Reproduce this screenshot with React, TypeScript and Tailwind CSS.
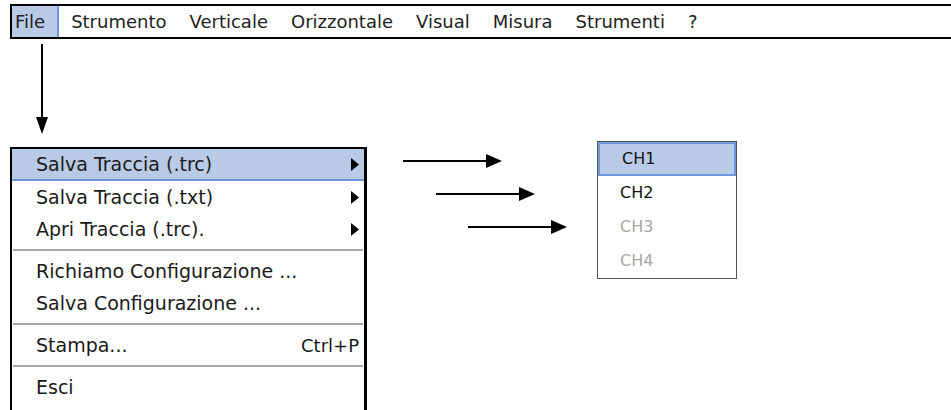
const FONT = { fontFamily: '"DejaVu Sans", Verdana, sans-serif' };

function RightArrow({ length }: { length: number }) {
  return (
    <svg width={length} height={16} viewBox={`0 0 ${length} 16`} className="block">
      <line x1={0} y1={8} x2={length - 14} y2={8} stroke="black" strokeWidth={2} />
      <polygon points={`${length - 16},1 ${length},8 ${length - 16},15`} fill="black" />
    </svg>
  );
}

function SubArrow() {
  return (
    <svg width={8} height={13} viewBox="0 0 8 13" className="block">
      <polygon points="0,0 8,6.5 0,13" fill="black" />
    </svg>
  );
}

function Separator() {
  return (
    <div className="py-[4px]">
      <div className="h-[2px] bg-[#a6a6a6] mx-[1px]" />
    </div>
  );
}

type Item = { label: string; sub?: boolean; shortcut?: string; active?: boolean };

function MenuRow({ item }: { item: Item }) {
  return (
    <div
      className={
        "h-[32px] flex items-center pl-[24px] pr-[5px] text-[19px] text-[#1a1a1a] " +
        (item.active ? "bg-[#b8cae5] border-b-2 border-[#6f96d6]" : "")
      }
    >
      <span className="flex-1 whitespace-nowrap">{item.label}</span>
      {item.sub && <SubArrow />}
      {item.shortcut && <span className="text-[18px]">{item.shortcut}</span>}
    </div>
  );
}

export default function App() {
  const menubar = ["Strumento", "Verticale", "Orizzontale", "Visual", "Misura", "Strumenti", "?"];
  const group1: Item[] = [
    { label: "Salva Traccia (.trc)", sub: true, active: true },
    { label: "Salva Traccia (.txt)", sub: true },
    { label: "Apri Traccia (.trc).", sub: true },
  ];
  const group2: Item[] = [
    { label: "Richiamo Configurazione ..." },
    { label: "Salva Configurazione ..." },
  ];
  const channels = [
    { name: "CH1", active: true, enabled: true },
    { name: "CH2", enabled: true },
    { name: "CH3" },
    { name: "CH4" },
  ];

  return (
    <div className="w-[951px] h-[410px] bg-white overflow-hidden pt-[4px]" style={FONT}>
      {/* menu bar */}
      <div className="ml-[10px] h-[35px] border-y-2 border-l-2 border-black flex items-stretch text-[18px] text-[#222]">
        <div className="bg-[#b8cae5] border-r-2 border-[#6f96d6] pl-[3px] pr-[12px] flex items-center">File</div>
        <div className="flex items-center gap-[23px] ml-[12px]">
          {menubar.map((m) => (
            <span key={m}>{m}</span>
          ))}
        </div>
      </div>

      {/* arrow down to the menu */}
      <div className="ml-[36px] mt-[5px]">
        <svg width={12} height={90} viewBox="0 0 12 90" className="block">
          <line x1={6} y1={0} x2={6} y2={75} stroke="black" strokeWidth={2} />
          <polygon points="0,73 12,73 6,90" fill="black" />
        </svg>
      </div>

      <div className="flex items-start mt-[7px]">
        {/* file menu */}
        <div className="ml-[10px] mt-[6px] w-[357px] h-[300px] border-2 border-r-[3px] border-b-0 border-black">
          {group1.map((it) => (
            <MenuRow key={it.label} item={it} />
          ))}
          <Separator />
          {group2.map((it) => (
            <MenuRow key={it.label} item={it} />
          ))}
          <Separator />
          <MenuRow item={{ label: "Stampa...", shortcut: "Ctrl+P" }} />
          <Separator />
          <MenuRow item={{ label: "Esci" }} />
        </div>

        {/* pointer arrows */}
        <div className="ml-[36px] mt-[12px] flex flex-col gap-[17px]">
          <RightArrow length={99} />
          <div className="ml-[33px]">
            <RightArrow length={99} />
          </div>
          <div className="ml-[65px]">
            <RightArrow length={99} />
          </div>
        </div>

        {/* channel submenu */}
        <div className="ml-[30px] w-[140px] border border-[#555] bg-white">
          {channels.map((c) => (
            <div
              key={c.name}
              className={
                "h-[34px] flex items-center pl-[22px] text-[16px] " +
                (c.active ? "bg-[#b8cae5] border-2 border-[#6f96d6] pl-[20px]" : "") +
                (c.enabled ? " text-[#111]" : " text-[#a8a8a8]")
              }
            >
              {c.name}
            </div>
          ))}
        </div>
      </div>
    </div>
  );
}
